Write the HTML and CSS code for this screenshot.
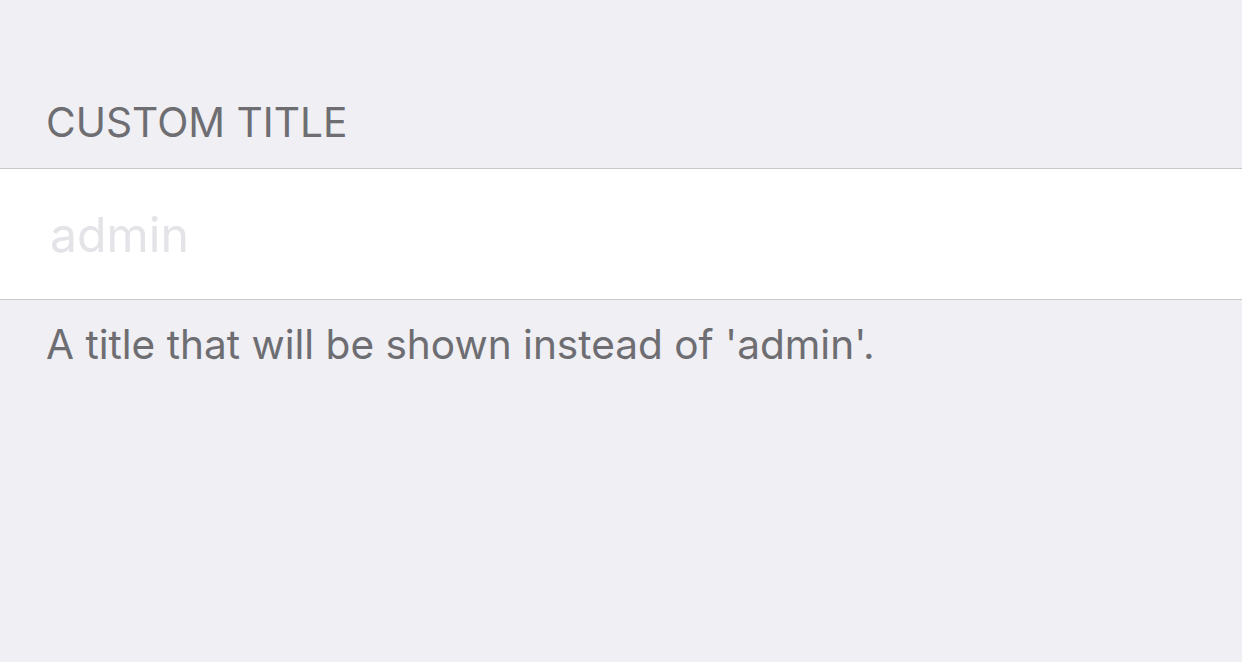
FILE: index.html
```html
<!DOCTYPE html>
<html lang="en">
<head>
    <meta charset="UTF-8">
    <title>Custom Title</title>
    <link rel="stylesheet" href="styles.css">
</head>
<body>
    <div class="group">
        <div class="group-header">CUSTOM TITLE</div>
        <div class="cell">
            <input class="cell-input" type="text" placeholder="admin">
        </div>
        <div class="group-footer">A title that will be shown instead of 'admin'.</div>
    </div>
</body>
</html>
```

FILE: styles.css
```css
* {
    margin: 0;
    padding: 0;
    box-sizing: border-box;
    font-family: Inter, Roboto, "Liberation Sans", sans-serif;
}

body {
    background-color: #efeff4;
    width: 1242px;
    height: 662px;
    overflow: hidden;
}

.group {
    padding-top: 98px;
}

.group-header {
    padding: 0 46px;
    font-size: 40.7px;
    line-height: 50px;
    color: #6d6d72;
    margin-bottom: 20px;
}

.cell {
    background-color: #fff;
    border-top: 1px solid #c8c7cc;
    border-bottom: 1px solid #c8c7cc;
    height: 132px;
    display: flex;
    align-items: center;
    padding: 0 46px 0 50px;
}

.cell-input {
    width: 100%;
    border: none;
    outline: none;
    background: transparent;
    font-family: Inter, Roboto, "Liberation Sans", sans-serif;
    font-size: 48.2px;
    color: #000;
}

.cell-input::placeholder {
    color: #e3e3e8;
}

.group-footer {
    padding: 20px 46px 0;
    font-size: 40.6px;
    line-height: 50px;
    color: #6d6d72;
}
```
